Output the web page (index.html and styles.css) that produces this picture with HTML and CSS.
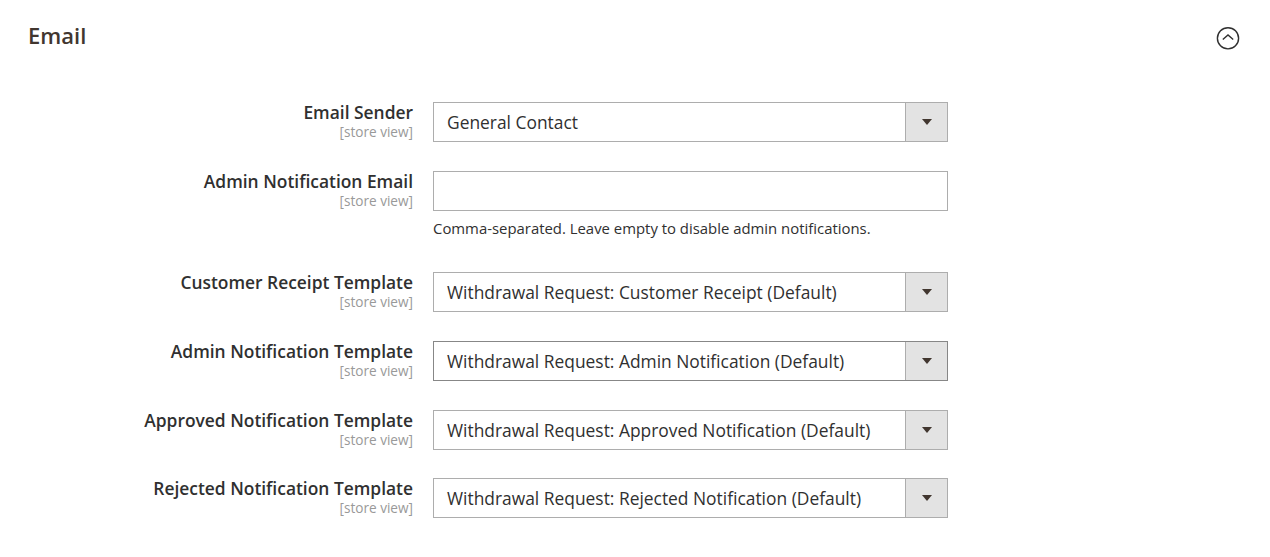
FILE: index.html
```html
<!DOCTYPE html>
<html>
<head>
<meta charset="utf-8">
<link rel="stylesheet" href="styles.css">
</head>
<body>
<section class="section">
  <div class="section-head">
    <h2 class="section-title">Email</h2>
    <span class="toggle">
      <svg width="24" height="24" viewBox="0 0 24 24"><circle cx="12" cy="12.3" r="10.6" fill="none" stroke="#303030" stroke-width="1.4"/><path d="M6.8 13.6 L12 9 L17.2 13.6" fill="none" stroke="#303030" stroke-width="1.4"/></svg>
    </span>
  </div>
  <div class="fields">
    <div class="field">
      <div class="label"><span class="label-text">Email Sender</span><span class="scope">[store view]</span></div>
      <div class="control"><div class="select"><span class="select-value">General Contact</span><span class="select-arrow"></span></div></div>
    </div>
    <div class="field field-note">
      <div class="label"><span class="label-text">Admin Notification Email</span><span class="scope">[store view]</span></div>
      <div class="control"><div class="input"></div><p class="note">Comma-separated. Leave empty to disable admin notifications.</p></div>
    </div>
    <div class="field">
      <div class="label"><span class="label-text">Customer Receipt Template</span><span class="scope">[store view]</span></div>
      <div class="control"><div class="select"><span class="select-value">Withdrawal Request: Customer Receipt (Default)</span><span class="select-arrow"></span></div></div>
    </div>
    <div class="field">
      <div class="label"><span class="label-text">Admin Notification Template</span><span class="scope">[store view]</span></div>
      <div class="control"><div class="select select-hover"><span class="select-value">Withdrawal Request: Admin Notification (Default)</span><span class="select-arrow"></span></div></div>
    </div>
    <div class="field">
      <div class="label"><span class="label-text">Approved Notification Template</span><span class="scope">[store view]</span></div>
      <div class="control"><div class="select"><span class="select-value">Withdrawal Request: Approved Notification (Default)</span><span class="select-arrow"></span></div></div>
    </div>
    <div class="field">
      <div class="label"><span class="label-text">Rejected Notification Template</span><span class="scope">[store view]</span></div>
      <div class="control"><div class="select"><span class="select-value">Withdrawal Request: Rejected Notification (Default)</span><span class="select-arrow"></span></div></div>
    </div>
  </div>
</section>
</body>
</html>
```
FILE: styles.css
```css
* { box-sizing: border-box; }
html, body { margin: 0; padding: 0; background: #fff; }
body { font-family: "Open Sans", "Noto Sans", sans-serif; color: #303030; }

.section { width: 1270px; }
.section-head {
  display: flex;
  justify-content: space-between;
  align-items: flex-start;
  padding: 21px 30px 0 28px;
  height: 74px;
}
.section-title {
  margin: 0;
  font-size: 22px;
  font-weight: 600;
  line-height: 28px;
  color: #41362f;
}
.toggle { display: block; margin-top: 5px; }
.toggle svg { display: block; }

.fields { padding-top: 28px; }
.field { display: flex; gap: 20px; margin-bottom: 29px; }
.field:nth-child(n+4) { margin-bottom: 28.7px; }
.field-note { margin-bottom: 35px; }
.label {
  width: 413px;
  display: flex;
  flex-direction: column;
  align-items: flex-end;
  text-align: right;
}
.label-text { font-size: 17.4px; font-weight: 600; line-height: 21px; color: #303030; }
.scope { font-size: 13.6px; line-height: 17px; color: #999; }
.control { width: 515px; }
.select, .input {
  height: 40px;
  border: 1px solid #adadad;
  background: #fff;
  display: flex;
  align-items: center;
}
.select-hover { border-color: #878787; }
.select-value {
  flex: 1;
  padding-left: 13px;
  font-size: 17.4px;
  line-height: 22px;
  color: #303030;
}
.select-arrow {
  width: 42px;
  align-self: stretch;
  background: #e3e3e3;
  border-left: 1px solid #adadad;
  position: relative;
}
.select-arrow::after {
  content: "";
  position: absolute;
  left: 16px;
  top: 16px;
  border-left: 5px solid transparent;
  border-right: 5px solid transparent;
  border-top: 6px solid #41362f;
}
.note { margin: 8px 0 0; font-size: 14.9px; line-height: 18px; color: #303030; }
```
